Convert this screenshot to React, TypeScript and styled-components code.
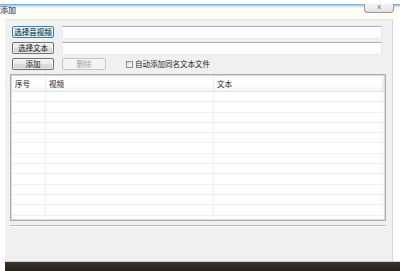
import React from 'react'
import { createGlobalStyle, styled } from 'styled-components'

const GlobalStyle = createGlobalStyle`
  html, body {
    margin: 0;
    padding: 0;
    background: #ffffff;
  }
  body {
    width: 400px;
    height: 271px;
    overflow: hidden;
    font-family: "Noto Sans CJK SC", "Noto Sans", sans-serif;
    font-size: 7.5px;
    color: #1e1e1e;
  }
`

const ROWS = 13

const App: React.FC = () => {
  return (
    <Frame>
      <GlobalStyle />
      <TitleBar>
        <TitleText>添加</TitleText>
        <CloseButton>x</CloseButton>
      </TitleBar>

      <Body>
        <FormRow>
          <Button $focused>选择音视频</Button>
          <TextField />
        </FormRow>
        <FormRow>
          <Button>选择文本</Button>
          <TextField />
        </FormRow>
        <FormRow>
          <Button>添加</Button>
          <Button $disabled $wide>删除</Button>
          <CheckLabel>
            <CheckBox />
            自动添加同名文本文件
          </CheckLabel>
        </FormRow>

        <ListView>
          <HeaderRow>
            <HeaderCell $w={34}>序号</HeaderCell>
            <HeaderCell $w={168}>视频</HeaderCell>
            <HeaderCell $w={169}>文本</HeaderCell>
            <HeaderFiller />
          </HeaderRow>
          <RowsArea>
            {Array.from({ length: ROWS }).map((_, i) => (
              <GridRow key={i}>
                <GridCell $w={34} />
                <GridCell $w={168} />
                <GridCell $w={169} />
              </GridRow>
            ))}
          </RowsArea>
        </ListView>

        <Separator />
      </Body>

      <Taskbar />
    </Frame>
  )
}

export default App

const Frame = styled.div`
  width: 400px;
  height: 271px;
  display: flex;
  flex-direction: column;
  background: #ffffff;
`

const TitleBar = styled.div`
  height: 19px;
  display: flex;
  align-items: flex-start;
  justify-content: space-between;
  padding-right: 6px;
  background:
    linear-gradient(to bottom, #ffffff 0, #ffffff 4px, #6b9ed4 4px, #c7dcf0 6px, #fdfcf4 8px, #fffef8 19px);
`

const TitleText = styled.span`
  margin-top: 5px;
  font-size: 8px;
  line-height: 9px;
  color: #1a2a40;
  text-shadow: 0 0 2px #cfe3ff;
`

const CloseButton = styled.div`
  width: 28px;
  height: 8px;
  margin-top: 4px;
  border: 1px solid #9a9a9a;
  border-top: none;
  border-radius: 0 0 4px 4px;
  background: linear-gradient(to bottom, #f4f4f4, #e4e4e4);
  color: #6a6a6a;
  font-family: "DejaVu Sans", sans-serif;
  font-size: 7px;
  line-height: 7px;
  text-align: center;
`

const Body = styled.div`
  flex: 1;
  margin: 0 7px 0 5px;
  padding: 6px 0 0 5px;
  background: #f0f0f0;
  border-right: 1px solid #d8d8d8;
  border-top: 1px solid #e2e2e2;
  display: flex;
  flex-direction: column;
  gap: 4px;
`

const FormRow = styled.div`
  display: flex;
  align-items: center;
  gap: 8px;
  padding-left: 2px;
  height: 12px;
`

const Button = styled.div<{ $focused?: boolean; $disabled?: boolean; $wide?: boolean }>`
  box-sizing: border-box;
  width: ${(p) => (p.$wide ? 44 : 42)}px;
  height: 12px;
  flex: none;
  display: flex;
  align-items: center;
  justify-content: center;
  border-radius: 2px;
  border: 1px solid ${(p) => (p.$focused ? '#3c7fb1' : p.$disabled ? '#c2c5c8' : '#707070')};
  background: ${(p) =>
    p.$disabled
      ? '#f4f4f4'
      : p.$focused
      ? 'linear-gradient(to bottom, #eaf6fd 0, #d9f0fc 50%, #bee6fd 51%, #a7d9f5 100%)'
      : 'linear-gradient(to bottom, #f2f2f2 0, #ebebeb 50%, #dddddd 51%, #cfcfcf 100%)'};
  box-shadow: ${(p) => (p.$disabled ? 'none' : 'inset 0 0 0 1px rgba(255,255,255,0.6)')};
  color: ${(p) => (p.$disabled ? '#a0a0a0' : '#1a1a1a')};
  line-height: 10px;
`

const TextField = styled.div`
  box-sizing: border-box;
  width: 320px;
  height: 13px;
  background: #ffffff;
  border: 1px solid #e3e9ef;
  border-top-color: #abadb3;
`

const CheckLabel = styled.label`
  display: flex;
  align-items: center;
  gap: 2px;
  margin-left: 12px;
  line-height: 10px;
`

const CheckBox = styled.span`
  box-sizing: border-box;
  width: 7px;
  height: 7px;
  border: 1px solid #8e8f8f;
  background: linear-gradient(135deg, #dcdcdc, #fbfbfb);
`

const ListView = styled.div`
  box-sizing: border-box;
  width: 376px;
  height: 147px;
  border: 1px solid #a9acb2;
  box-shadow: inset 0 0 0 1px #d8dadd;
  background: #ffffff;
  display: flex;
  flex-direction: column;
  overflow: hidden;
`

const HeaderRow = styled.div`
  display: flex;
  height: 15px;
  flex: none;
  margin: 1px 1px 0 1px;
  background: linear-gradient(to bottom, #ffffff 0, #ffffff 60%, #f3f4f6 100%);
  border-bottom: 1px solid #e2e4e8;
`

const HeaderCell = styled.div<{ $w: number }>`
  width: ${(p) => p.$w}px;
  flex: none;
  box-sizing: border-box;
  padding: 3px 0 0 3px;
  line-height: 9px;
  border-right: 1px solid #eaecef;
  color: #222;
`

const HeaderFiller = styled.div`
  flex: 1;
  background: linear-gradient(to bottom, #f6f6f6, #e9e9e9);
`

const RowsArea = styled.div`
  display: flex;
  flex-direction: column;
  margin: 0 1px;
`

const GridRow = styled.div`
  display: flex;
  height: 10.3px;
  flex: none;
  border-bottom: 1px solid #f0f1f3;
  box-sizing: border-box;
`

const GridCell = styled.div<{ $w: number }>`
  width: ${(p) => p.$w}px;
  flex: none;
  box-sizing: border-box;
  border-right: 1px solid #f2f3f5;
`

const Separator = styled.div`
  width: 376px;
  height: 0;
  border-top: 1px solid #b8b8b8;
  border-bottom: 1px solid #ffffff;
`

const Taskbar = styled.div`
  height: 9px;
  flex: none;
  margin-left: 5px;
  border-top: 1px solid #d0d0d0;
  background: linear-gradient(to bottom, #3a342c, #231f1a);
`
